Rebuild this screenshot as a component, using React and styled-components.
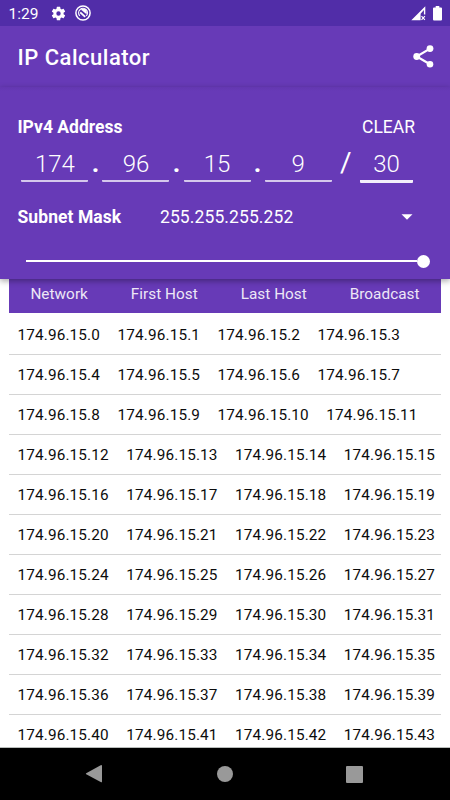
import { Fragment } from "react";
import styled, { createGlobalStyle } from "styled-components";

const GlobalStyle = createGlobalStyle`
  * {
    box-sizing: border-box;
  }
  body {
    margin: 0;
    background: #fff;
    font-family: Roboto, "Liberation Sans", sans-serif;
  }
`;

const octets = ["174", "96", "15", "9"];
const columns = ["Network", "First Host", "Last Host", "Broadcast"];
const rows = Array.from({ length: 11 }, (_, row) =>
  [0, 1, 2, 3].map((host) => `174.96.15.${row * 4 + host}`)
);

function App() {
  return (
    <Screen>
      <GlobalStyle />
      <StatusBar>
        <Clock>1:29</Clock>
        <GearIcon />
        <BlockedIcon />
        <Spacer />
        <SignalIcon />
        <BatteryIcon />
      </StatusBar>

      <AppBar>
        <Title>IP Calculator</Title>
        <ShareIcon />
      </AppBar>

      <Panel>
        <LabelRow>
          <Label>IPv4 Address</Label>
          <ClearButton>CLEAR</ClearButton>
        </LabelRow>
        <AddressRow>
          {octets.map((octet, i) => (
            <Fragment key={i}>
              <Octet>{octet}</Octet>
              {i < 3 && <Dot>.</Dot>}
            </Fragment>
          ))}
          <Slash>/</Slash>
          <Prefix>30</Prefix>
        </AddressRow>
        <MaskRow>
          <Label>Subnet Mask</Label>
          <Mask>255.255.255.252</Mask>
          <Caret />
        </MaskRow>
        <Slider>
          <Track />
          <Thumb />
        </Slider>
      </Panel>

      <Table>
        <TableHead>
          {columns.map((column) => (
            <span key={column}>{column}</span>
          ))}
        </TableHead>
        {rows.map((row) => (
          <TableRow key={row[0]}>
            {row.map((ip) => (
              <span key={ip}>{ip}</span>
            ))}
          </TableRow>
        ))}
      </Table>

      <NavBar>
        <svg width="18" height="20" viewBox="0 0 18 20">
          <path d="M1.2 9.3 15.7 1.2Q17 .6 17 2V17.4Q17 18.8 15.7 18.1L1.2 10.2Q.5 9.7 1.2 9.3Z" fill="#999" />
        </svg>
        <HomeDot />
        <RecentSquare />
      </NavBar>
    </Screen>
  );
}

//Icons
function GearIcon() {
  return (
    <svg width="17" height="17" viewBox="0 0 24 24" fill="#fff">
      <path d="M19.14 12.94c.04-.3.06-.61.06-.94s-.02-.64-.07-.94l2.03-1.58a.49.49 0 0 0 .12-.61l-1.92-3.32a.49.49 0 0 0-.59-.22l-2.39.96a7 7 0 0 0-1.62-.94l-.36-2.54A.48.48 0 0 0 13.92 2.4h-3.84a.48.48 0 0 0-.47.41l-.36 2.54c-.59.24-1.13.57-1.62.94l-2.39-.96a.49.49 0 0 0-.59.22L2.74 8.87a.48.48 0 0 0 .12.61l2.03 1.58c-.05.3-.09.63-.09.94s.02.64.07.94l-2.03 1.58a.49.49 0 0 0-.12.61l1.92 3.32c.12.22.37.29.59.22l2.39-.96c.5.38 1.03.7 1.62.94l.36 2.54c.05.24.24.41.48.41h3.84c.24 0 .44-.17.47-.41l.36-2.54a7 7 0 0 0 1.62-.94l2.39.96c.22.08.47 0 .59-.22l1.92-3.32a.49.49 0 0 0-.12-.61zM12 15.1a3.1 3.1 0 1 1 0-6.2 3.1 3.1 0 0 1 0 6.2z" />
    </svg>
  );
}

function BlockedIcon() {
  return (
    <svg width="16" height="16" viewBox="0 0 16 16" fill="none" stroke="#fff">
      <circle cx="8" cy="8" r="7.1" strokeWidth="1.5" />
      <path d="M4.8 10.8A4.4 4.4 0 1 1 11.2 10.9" strokeWidth="1.2" />
      <path d="M5.2 7.4 10.2 11.9" strokeWidth="1.9" />
      <path d="M5.8 4.6Q8.2 3 10.7 4.5 12.500 6.5 11.500 9.300Z" fill="#fff" stroke="none" />
    </svg>
  );
}

function SignalIcon() {
  return (
    <svg width="15" height="15" viewBox="0 0 15 15">
      <path d="M.3 14.2 14.3.2V8.5H12.9V4L9.6 7.8V14.2Z" fill="#fff" />
      <path d="m10.5 10.2 3.4 3.7m0-3.7-3.4 3.7" stroke="#fff" strokeWidth="1.1" />
    </svg>
  );
}

function BatteryIcon() {
  return (
    <svg width="9" height="15" viewBox="0 0 9 15">
      <path d="M2.7 0h3.6v1.4H8q1 0 1 1v11.2q0 1-1 1H1q-1 0-1-1V2.4q0-1 1-1h1.7Z" fill="#fff" />
    </svg>
  );
}

function ShareIcon() {
  return (
    <svg width="21" height="23" viewBox="0 0 21 23" fill="#fff">
      <path d="M17 3.6 3.7 11.5 17 19.2" fill="none" stroke="#fff" strokeWidth="2.2" />
      <circle cx="17" cy="3.6" r="3.4" />
      <circle cx="3.7" cy="11.5" r="3.4" />
      <circle cx="17" cy="19.2" r="3.3" />
    </svg>
  );
}

function Caret() {
  return (
    <svg width="12" height="6" viewBox="0 0 12 6">
      <path d="M.5.2h11L6 5.8Z" fill="#fff" />
    </svg>
  );
}

const Screen = styled.div`
  width: 450px;
  height: 800px;
  display: flex;
  flex-direction: column;
  overflow: hidden;
  background: #fff;
`;

const StatusBar = styled.header`
  flex: none;
  height: 26px;
  display: flex;
  align-items: center;
  padding: 0 8px 0 8px;
  background: #512da8;
  color: #fff;
  svg {
    flex: none;
    margin-right: 7.5px;
  }
  svg:last-child {
    margin: 0;
  }
`;

const Clock = styled.span`
  width: 42px;
  padding: 2px 0 0 0.5px;
  font-size: 15.5px;
  line-height: 26px;
`;

const Spacer = styled.div`
  flex: 1;
`;

const AppBar = styled.div`
  flex: none;
  height: 61px;
  display: flex;
  align-items: center;
  justify-content: space-between;
  padding: 0 16px 0 17.5px;
  background: #673ab7;
  color: #fff;
`;

const Title = styled.h1`
  margin: 1px 0 0;
  font-size: 22px;
  font-weight: 500;
  letter-spacing: 0.5px;
`;

const Panel = styled.section`
  position: relative;
  flex: none;
  height: 192px;
  padding: 29px 17px 0 17.5px;
  background: linear-gradient(#6337b0, #673ab7 4px);
  color: #fff;
  box-shadow: 0 2px 6px rgba(0, 0, 0, 0.35);
`;

const LabelRow = styled.div`
  display: flex;
  justify-content: space-between;
  height: 22px;
  line-height: 22px;
  padding-right: 18px;
`;

const Label = styled.span`
  font-size: 17.5px;
  font-weight: 700;
`;

const ClearButton = styled.span`
  font-size: 17.5px;
`;

const AddressRow = styled.div`
  display: flex;
  height: 46px;
  padding: 8px 0 0 3.9px;
`;

const Octet = styled.div`
  width: 67px;
  height: 36px;
  border-bottom: 2px solid #d5c8ec;
  border-radius: 1px;
  text-align: center;
  font-size: 24px;
  font-weight: 300;
  line-height: 36px;
`;

const Prefix = styled(Octet)`
  width: 53px;
  height: 37px;
  border-bottom: 3px solid #f3effa;
`;

const Dot = styled.span`
  width: 14.1px;
  text-align: center;
  font-size: 26px;
  font-weight: 700;
  line-height: 34px;
`;

const Slash = styled.span`
  width: 28.3px;
  text-align: center;
  font-size: 28px;
  line-height: 34px;
`;

const MaskRow = styled.div`
  display: flex;
  align-items: center;
  height: 40px;
  padding-right: 20.5px;
  margin-top: 13px;
  ${Label} {
    width: 142.5px;
    letter-spacing: 0.07px;
  }
`;

const Mask = styled.span`
  flex: 1;
  font-size: 17.5px;
  letter-spacing: 0.1px;
`;

const Slider = styled.div`
  display: flex;
  align-items: center;
  height: 14px;
  margin-top: 17px;
  padding-left: 8.5px;
`;

const Track = styled.div`
  width: 391px;
  height: 2px;
  background: #fff;
`;

const Thumb = styled.div`
  flex: none;
  width: 13px;
  height: 13px;
  border-radius: 50%;
  background: #fff;
`;

const Table = styled.section`
  flex: 1;
  min-height: 0;
  overflow: hidden;
  margin: 0 9px;
`;

const TableHead = styled.div`
  display: flex;
  justify-content: space-around;
  height: 34px;
  margin-bottom: 2px;
  line-height: 31px;
  background: #673ab7;
  color: #ede7f6;
  font-size: 15.3px;
  letter-spacing: 0.05px;
`;

const TableRow = styled.div`
  display: flex;
  gap: 17.5px;
  height: 40px;
  padding: 0 0 0 8.5px;
  line-height: 41px;
  border-bottom: 1px solid #d4d4d4;
  color: #0c0c0c;
  font-size: 15.3px;
  letter-spacing: 0.15px;
  white-space: nowrap;
`;

const NavBar = styled.nav`
  flex: none;
  height: 53px;
  display: flex;
  align-items: center;
  gap: 113.5px;
  padding-left: 85px;
  background: #000;
  border-top: 1px solid #b9bdbb;
`;

const HomeDot = styled.div`
  width: 16px;
  height: 16px;
  border-radius: 50%;
  background: #999;
`;

const RecentSquare = styled.div`
  width: 17px;
  height: 17px;
  border-radius: 1px;
  background: #999;
`;

export default App;
